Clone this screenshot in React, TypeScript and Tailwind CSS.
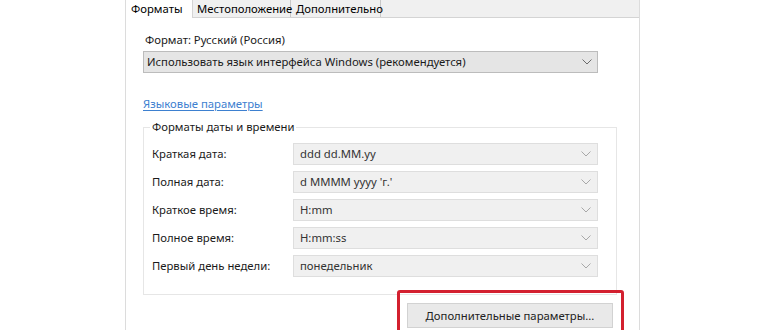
import React from "react";

const Chevron = ({ color }: { color: string }) => (
  <svg width="10" height="6" viewBox="0 0 10 6" fill="none">
    <path d="M0.5 0.5 L5 5 L9.5 0.5" stroke={color} strokeWidth="1" />
  </svg>
);

const rows = [
  ["Краткая дата:", "ddd dd.MM.yy"],
  ["Полная дата:", "d MMMM yyyy 'г.'"],
  ["Краткое время:", "H:mm"],
  ["Полное время:", "H:mm:ss"],
  ["Первый день недели:", "понедельник"],
];

export default function App() {
  return (
    <div
      className="relative w-[770px] h-[330px] overflow-hidden bg-white text-[11.3px] leading-[16px] text-[#1a1a1a]"
      style={{ fontFamily: '"Noto Sans", "Open Sans", sans-serif' }}
    >
      <div className="ml-[125px] w-[515px] h-[330px] border-l border-r border-[#dcdcdc] flex flex-col">
        {/* Tab strip */}
        <div className="flex h-[18px] bg-[#f0f0f0] border-b border-[#d4d4d4]">
          <div className="w-[67px] h-[18px] bg-white border-r border-[#d4d4d4] flex items-center pl-[5px] text-black">
            Форматы
          </div>
          <div className="w-[98px] h-[17px] border-r border-[#c8c8c8] flex items-center pl-[4px] text-black">
            Местоположение
          </div>
          <div className="w-[90px] h-[17px] border-r border-[#c8c8c8] flex items-center pl-[5px] text-black">
            Дополнительно
          </div>
        </div>

        <div className="flex flex-col pl-[17px]">
          <div className="mt-[14px] pl-[2px]">Формат: Русский (Россия)</div>
          <div className="mt-[3px] w-[455px] h-[22px] bg-[#e5e5e5] border border-[#bcbcbc] flex items-center justify-between pl-[3px] pr-[5px]">
            <span>Использовать язык интерфейса Windows (рекомендуется)</span>
            <Chevron color="#6b6b6b" />
          </div>

          <a className="mt-[23px] self-start text-[#3d80d0] underline underline-offset-2 decoration-[#3d80d0]">
            Языковые параметры
          </a>

          <fieldset className="mt-[7px] w-[474px] border border-[#e6e6e6] pl-[8px] pr-[18px] pt-[8px] pb-[17px]">
            <legend className="-ml-[2px] px-[2px] leading-[16px]">Форматы даты и времени</legend>
            <div className="flex flex-col gap-[6px]">
              {rows.map(([label, value]) => (
                <div key={label} className="flex items-center h-[22px]">
                  <div className="w-[141px]">{label}</div>
                  <div className="w-[305px] h-[22px] bg-[#f0f0f0] border border-[#dedede] flex items-center justify-between pl-[6px] pr-[6px] text-[#333]">
                    <span>{value}</span>
                    <Chevron color="#a8a8a8" />
                  </div>
                </div>
              ))}
            </div>
          </fieldset>

          <div className="w-[474px] flex justify-end pr-[4px] mt-[8px]">
            <div className="w-[206px] h-[25px] bg-[#e9e9e9] border border-[#d2d2d2] flex items-center justify-center text-[#222]">
              Дополнительные параметры...
            </div>
          </div>
        </div>
      </div>

      {/* Highlight annotation */}
      <div className="absolute left-[397px] top-[290px] w-[227px] h-[60px] border-[3px] border-[#d3202f] rounded-[3px]" />
    </div>
  );
}
